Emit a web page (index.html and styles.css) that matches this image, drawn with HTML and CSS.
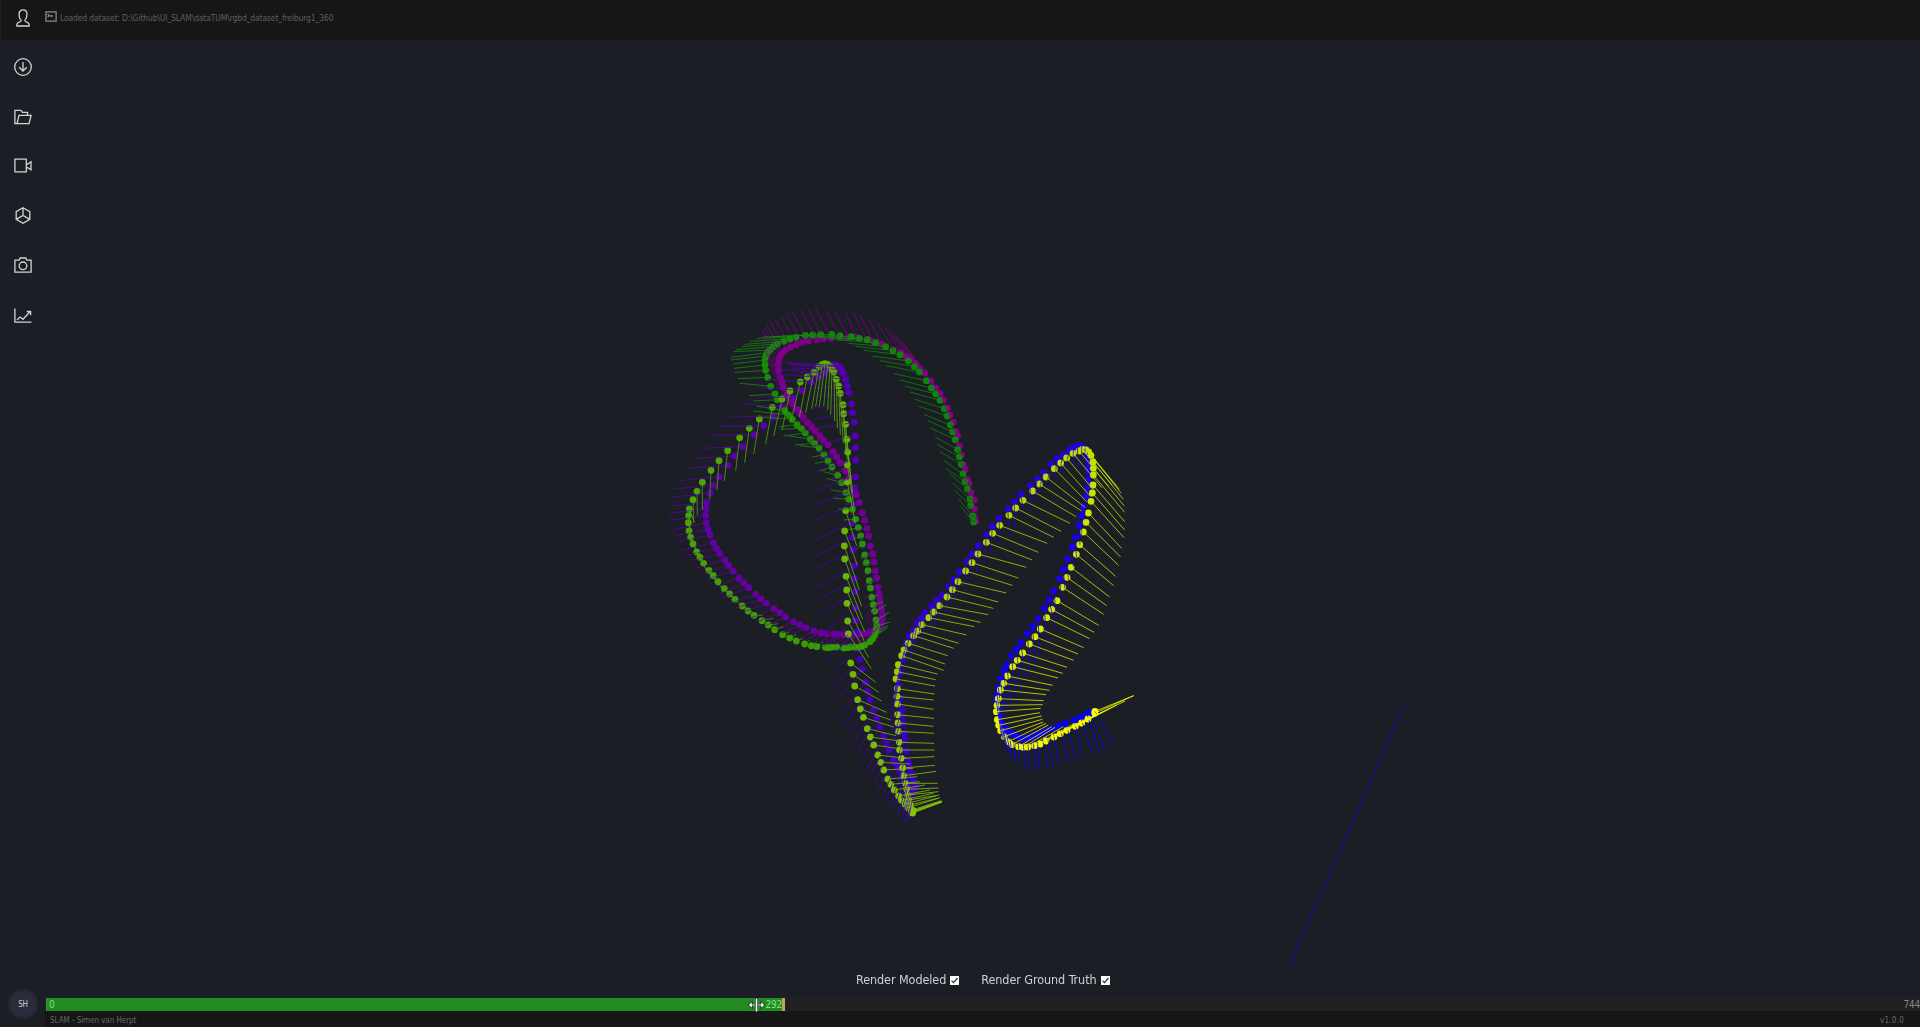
FILE: index.html
```html
<!DOCTYPE html>
<html lang="en">
<head>
<meta charset="utf-8">
<title>SLAM</title>
<link rel="stylesheet" href="styles.css">
</head>
<body>
<div class="app">
  <header class="topbar">
    <span class="user"><svg width="14" height="18" viewBox="0 0 14 18"><path d="M5.2 11.2C3.6 9.8 3 7.500 3 5.200 3 2.600 4.800 .9 7 .9s4 1.700 4 4.300c0 2.300-.6 4.600-2.200 6M5.200 11.200c0 1.300-.6 1.600-2 2C1.600 13.700.9 14.200.9 15.500V17h12.200v-1.500c0-1.300-.7-1.800-2.300-2.300-1.400-.4-2-.7-2-2"/></svg></span>
    <svg class="term" width="12" height="11" viewBox="0 0 12 11"><path d="M.9.9h10.200v9.200H.9zM2.700 3l1.500 1.500L2.700 6M5 5h3"/></svg>
    <span class="status">Loaded dataset: D:\Github\UI_SLAM\dataTUM\rgbd_dataset_freiburg1_360</span>
  </header>
  <div class="body">
    <nav class="side">
      <a><svg width="18" height="18" viewBox="0 0 18 18"><circle cx="9" cy="9" r="8.300"/><path d="M9 4v9M5.200 9.200 9 13l3.800-3.800"/></svg></a>
      <a><svg width="18" height="18" viewBox="0 0 18 18"><path d="M3 15.700H.9V2.400h6l1.600 2h5v3M3 15.700h12l2.100-8.300H5zM.9 15.700h2"/></svg></a>
      <a><svg width="18" height="18" viewBox="0 0 18 18"><path d="M.9 2.200h11.400v12.600H.9zM12.300 7h1.400L17 4.800v8l-3.300-2.200h-1.400"/></svg></a>
      <a><svg width="18" height="18" viewBox="0 0 18 18"><path d="M9 .8l6.800 3.800v7.800L9 16.200l-6.800-3.800V4.600zM9 .8v7.700M2.200 12.400 9 8.500l6.800 3.900"/></svg></a>
      <a><svg width="18" height="18" viewBox="0 0 18 18"><path d="M.9 15.200V3.200h4.300l1-2.200h5.600l1 2.200h4.300v12z"/><circle cx="9" cy="8.800" r="3.800"/></svg></a>
      <a><svg width="18" height="18" viewBox="0 0 18 18"><path d="M.9 2.400v13.700H17.500M3 14l3-3 3 2.300 7-7.500M12.700 5.500h3.900v3.700"/></svg></a>
      <span class="avatar">SH</span>
    </nav>
    <main class="main">
      <section class="view">
        <canvas id="scene" width="1874" height="956"></canvas>
        <div class="options">
          <label>Render Modeled <svg width="9" height="9" viewBox="0 0 9 9"><path d="M1.500 4.700l2 2 4-4.700"/></svg></label>
          <label>Render Ground Truth <svg width="9" height="9" viewBox="0 0 9 9"><path d="M1.500 4.700l2 2 4-4.700"/></svg></label>
        </div>
      </section>
      <div class="timeline">
        <div class="done"><span>0</span><span>292</span></div>
        <span class="total">744</span>
        <svg class="cursor" width="17" height="14" viewBox="0 0 17 14"><path d="M0 7l4.500-4v3H7V0h3v6h2.500V3L17 7l-4.500 4V8H10v6H7V8H4.500v3z" fill="#111"/><path d="M.8 7l3-2.700v2.100H7v1.200H3.800v2.100zM16.200 7l-3-2.700v2.100H10v1.200h3.200v2.100zM7.600.5h1.800v13H7.600z" fill="#fff"/></svg>
      </div>
      <footer class="foot"><span>SLAM - Simen van Herpt</span><span class="ver">v1.0.0</span></footer>
    </main>
  </div>
</div>
<script src="scene.js"></script>
</body>
</html>
```
FILE: styles.css
```css
* { box-sizing: border-box; }
body {
  margin: 0;
  overflow: hidden;
  background: #1b1e25;
  color: #d0d0d2;
  font-family: "DejaVu Sans Condensed", "DejaVu Sans", sans-serif;
  font-stretch: condensed;
}
svg { fill: none; stroke: #d4d4d4; stroke-width: 1.300; display: block; }
.app { display: flex; flex-direction: column; width: 1920px; height: 1027px; }
.topbar {
  display: flex;
  align-items: flex-start;
  height: 40px;
  margin-left: 1px;
  background: #161616;
}
.user { width: 44px; padding: 9px 0 0 15px; }
.term { margin-top: 11px; stroke: #8b8b8b; }
.status {
  margin: 12px 0 0 3px;
  color: #5c5e60;
  font-size: 8.500px;
  line-height: 13px;
  letter-spacing: -0.140px;
  white-space: pre;
}
.body { display: flex; flex: 1; min-height: 0; }
.side { display: flex; flex-direction: column; width: 45px; padding: 18px 0 8px 14px; }
.side a { height: 49.700px; }
.avatar {
  width: 30px;
  height: 30px;
  margin: auto 0 0 -6px;
  border: 3px solid #262934;
  border-radius: 50%;
  background: #2a2d39;
  font-size: 8px;
  line-height: 25px;
  letter-spacing: -0.300px;
  text-align: center;
}
.main { display: flex; flex: 1; flex-direction: column; }
.view { position: relative; height: 958px; padding-left: 1px; }
.view canvas { display: block; }
.options {
  position: absolute;
  top: 932px;
  left: 811px;
  display: flex;
  gap: 22px;
  font-size: 12.500px;
  line-height: 16px;
  letter-spacing: -0.080px;
}
.options label { display: flex; gap: 4px; align-items: center; white-space: nowrap; }
.options svg { background: #fff; stroke: #333; stroke-width: 1.200; }
.timeline {
  position: relative;
  display: flex;
  justify-content: space-between;
  height: 13px;
  margin-left: 1px;
  background: #212121;
  font-size: 10px;
  line-height: 13px;
  letter-spacing: -0.200px;
}
.done {
  display: flex;
  justify-content: space-between;
  width: 739px;
  padding-left: 2px;
  border-left: 1px solid #3d9340;
  border-right: 3px solid #c9a151;
  background: #228b22;
  color: #84e184;
}
.total { color: #8a8a8a; }
.cursor { position: absolute; left: 702px; top: 0; stroke: none; }
.foot {
  display: flex;
  justify-content: space-between;
  flex: 1;
  padding: 3px 16px 0 5px;
  background: #161616;
  color: #68686a;
  font-size: 8px;
  line-height: 13px;
}
.foot span { letter-spacing: -0.060px; }
.foot .ver { letter-spacing: 0.250px; }
```
FILE: scene.js
```js
// Camera trajectories. Each block: origin x, origin y, then poses as
// "x,y" or "x,y>ex,ey" (e = end of the view direction), in thirds of a pixel.
// Poses without a view direction take one interpolated from their neighbours.
const modeled = [
  [820, 300, "461,666>421,618 458,648>415,596 452,617>403,570 450,597>397,548 442,567>388,521 435,545>376,504 429,522>370,480 424,493>360,455 418,471>352,433 413,449>345,411 406,419>331,384 398,396>324,362 391,375>313,344 381,348>297,319 373,326>285,298 360,301>270,276 347,282>255,258 334,264>240,240 319,242>222,221 298,216>198,197 283,200>180,182 265,183>158,168 240,164>132,151 219,152>107,139 197,140>85,130 167,128>52,120 142,119>29,116 118,115 94,110 60,107 35,103"],
  [660, 300, "482,104>365,109 458,105 436,106>310,111 408,112>290,115 390,117>270,124 372,124>254,133 352,132>245,140 340,140>228,149 330,150>220,155 322,158>213,172 318,168>213,180 315,180>218,192 315,195>222,205 317,211>225,217 323,232>233,236 332,259>240,250 345,282>268,287 352,299>280,303 374,332>290,318 386,345>280,333 397,358>305,351 411,374>358,380 424,385>360,388 436,399>370,408 451,417>387,408 464,430>405,435 477,444>420,437 492,464>455,472 504,483>465,490 516,501>478,514 533,526>490,515 545,548>500,535 558,578 566,598>520,594"],
  [660, 460, "577,148 587,178>550,180 595,203 602,228 607,252>590,268 614,285 619,308 624,332 628,362 631,384>640,380 636,412 640,434>668,426 644,454>680,435 648,480>688,458 650,498>690,486 648,512>685,498 644,524>680,505 638,536>668,512 630,545>650,530 615,555>655,530 602,560>640,545 588,562>620,552 575,561>600,562 563,563 552,564>580,570 530,561 515,562>550,570 504,563 496,562 471,560>490,545 454,557 434,552>450,540 409,543>430,535 389,534>410,523 368,524>390,515 344,509>370,500 325,495>355,491 306,482>340,475 282,466>308,466 264,453>290,460 247,438 225,418>240,432 209,402 193,386>205,402 174,365 160,347>170,372 147,331 131,310>138,330 120,292 110,276>128,308 99,252>118,290 92,232>108,270 87,213>98,250 85,188>94,235 86,167>92,218 88,147>103,188 99,119>101,188 111,94>112,166 127,67>127,150 153,31>149,118"],
  [660, 300, "177,482>171,570 203,452>193,543 239,413>227,512 268,385>254,488 298,357>281,463 337,322>317,431 366,297>341,408 390,273>367,386 421,246>392,368 442,231>418,352 462,217>437,338 477,200>455,326 487,193>467,320 495,191>478,320 503,193>491,318 510,200>503,330 516,208>512,344 522,216>524,363 529,238>532,384 536,258>541,405 541,280>550,430 549,314>558,460 551,341>562,480 557,373>568,510 561,418>574,550 563,456>578,580 562,494>582,620 562,546>586,670"],
  [660, 460, "557,152>590,258 554,213>592,315 553,258>598,390 554,297>605,440 558,349>608,478 560,390>614,515 561,430>612,542 563,483>626,592 565,522>634,626"],
  [830, 630, "62,99>137,157 69,133>146,187 74,168>155,213 83,209>170,247 91,237>182,270 100,262>191,291 112,296>198,317 121,321>210,333 131,345>215,357 143,375>230,385 152,397>240,402 161,420>250,415 173,447>262,440 182,463>270,455 193,480>285,465 206,498>300,480 215,511>310,490 225,522>318,498 234,533>325,505 245,546>335,515 248,549>337,516 246,548>336,516 247,545>335,513 249,542>334,514 246,540>333,512 240,525>330,503 236,510>328,495 233,495>325,485 230,478>325,474 226,460>323,460 221,437>319,424 218,414>315,406 214,385>313,380 209,360>313,360 208,337>312,340 205,304>312,310 204,279>310,289 203,254>312,265 202,222>311,238 201,199>311,210 202,176>313,192 198,147>315,168 202,125>317,149 205,104>323,132 215,77>341,121 222,60>345,102 235,40>353,77 251,17>371,55 263,3>386,40"],
  [880, 430, "126,584>260,615 146,563>283,590 161,546>302,577 178,527>325,554 201,501>340,535 217,479>355,516 234,455>379,489 257,423>397,466 276,398>415,444 294,372>439,412 319,337>457,390 338,310>475,367 359,286>502,340 387,256>521,322 407,234>543,304 429,211>570,280 458,183>588,260 478,162>605,243 498,141>615,232 523,116>620,215 542,99>632,200 560,84>645,185 579,70 597,63 607,58 618,60>710,170 626,66>718,178 633,76>724,190 639,96>730,208 640,115>733,228 640,135>734,247 639,165>734,275 637,189>734,300 633,214>732,323 625,249>725,355 618,277>722,381 610,306>716,406 599,344>707,439 589,373>701,467 573,412>689,501 561,442>680,527 548,472>671,553"],
  [940, 600, "351,2>476,76 335,28>462,97 320,53>449,116 301,87>431,143 285,110>414,162 268,132>401,181 248,159>381,202 232,181>368,220 218,200>354,234 202,228>338,256 191,250>328,271 181,270>318,284 175,296>311,302 171,316>308,314 169,335>302,325 172,359>300,338 176,376>305,348 182,392>307,358 193,410>310,366 205,425>318,370 216,434>325,375 236,440>335,380 250,442>345,382 264,441>370,380 284,437>395,375 301,432>410,370 318,423>430,362 342,411>450,350 361,401>470,343 381,391>490,335 406,379>510,325 425,369>530,315 444,357>555,303 464,340>581,287 465,334>581,287"]
];
const truth = [
  [820, 300, "467,664>445,658 463,650 463,627 463,600 453,578 447,550 442,538 436,507 430,495 424,465>414,450 418,438 413,408 408,395 400,367 390,345 383,324 370,300 360,281>340,250 347,264 332,243 313,219>265,150 300,207>250,130 287,190>240,118 272,178>228,108 258,170>215,97 243,158>196,85 220,150>175,72 185,133>145,55 160,125>121,46 140,118>100,40 110,112>76,35 85,112>43,34 60,112>19,32"],
  [660, 300, "514,115>467,27 491,117>445,28 471,119>422,30 445,123>397,36 427,127>379,43 410,133>361,48 392,141>345,58 378,149>330,65 368,158>320,75 361,168>313,84 357,180>306,92 355,195>303,105 356,212>305,130 361,233>312,150 366,246>320,180 371,262 381,284 390,297 398,311>365,280 411,328 421,340 430,352 443,368>413,363 455,380 466,393 480,408 490,420 504,434>459,436 519,455 530,471 541,488>491,493"],
  [660, 460, "556,33>505,36 567,54>515,56 581,84>535,88 589,104 598,127 607,158 615,181 621,205 626,228 632,258>602,268 638,282 642,305 646,333>610,350 650,354 654,382 657,402 660,420>615,470 662,433 664,448 667,462 667,478>620,520 664,492 655,505 640,512 625,518 610,521>570,560 595,523 580,524 565,524 550,524 536,523 521,522 499,521>459,541 482,518 462,513 438,503 420,495 401,485 378,471 360,458>295,485 342,446 319,430 303,417 287,403>210,430 266,383 252,369>178,402 237,354>160,384 219,333>142,357 206,317>125,341 195,300>108,325 180,281>93,302 169,265>75,287 160,248>65,271 150,225>52,245 144,208>45,227 139,189>37,209 137,166>30,181 138,146>27,160 141,127>28,139 151,99>36,112 162,76>42,87 178,50>57,62 204,16>79,25"],
  [660, 300, "224,468>100,475 249,440>122,445 283,404>152,406 311,378>180,378 340,351>207,348 367,320>243,311 400,294>268,286 426,272>292,262 454,246>325,238 475,232>345,222 495,218>362,208 508,205>375,187 520,196>380,188 530,196>390,193 538,200>395,198 544,208>400,205 550,220>420,218 557,239>440,225 562,258>440,265 567,279>460,290 575,312>460,325 578,338>462,358 583,367>475,385 586,408>485,430 587,443>480,475 587,480>462,515"],
  [660, 460, "586,50>462,92 585,88>462,135 582,135>462,180 577,188>462,243 577,232>464,290 580,269>464,329 583,317>471,382 584,356>475,422 586,394>478,464 586,444>485,520 587,482>490,560 592,516>497,602 596,565>528,628"],
  [830, 630, "90,88>5,180 97,118>18,213 107,157>30,256 113,184>45,285 120,210>57,312 131,241>69,345 140,265>82,368 149,289>93,394 161,318>110,420 169,340>120,443 178,361>133,462 190,388>143,487 198,403>157,502 205,415>167,514 214,432>178,528 222,450>190,540 232,463>203,555 240,475>215,565 246,485>225,574 252,482>233,578 258,468>232,568 250,450>225,550 243,430 238,410>215,505 235,392 230,363>205,460 225,330>200,430 224,310 219,280>190,380 217,258 217,238>185,335 212,205 205,165>182,270 210,130 218,85 222,65>195,180 230,38 238,18>218,130 250,2>240,90"],
  [880, 430, "111,580>100,650 123,564 136,548 155,527>150,600 170,511 186,494 206,469>200,545 222,448 238,425>225,500 261,394 277,371 295,347>290,430 319,313 337,288>332,375 357,265>360,345 384,236>385,320 403,215>403,295 423,193>430,250 451,167>450,235 471,147>465,210 490,127>475,195 513,103>500,165 531,86>525,145 548,73>540,130 568,60>555,120 580,53>580,110 592,47>595,110 605,48>605,120 615,55 622,68>618,130 626,85 628,105>625,170 627,125 625,150 622,175>615,235 619,200 610,231>605,300 604,257 597,286>600,345 586,322 576,350>580,410 562,387>565,450 550,417>555,480 539,446>545,520 521,483>530,560 507,509>525,590"],
  [940, 600, "313,24>320,130 294,56>300,175 278,79>285,200 262,100>270,220 243,127>255,240 229,147>243,270 214,167>228,300 200,194>215,320 191,215>205,335 181,237>195,350 175,263>190,380 171,283 169,303>185,410 172,325 178,350>200,445 185,370>205,455 195,387>215,470 207,395>218,480 220,403>225,485 233,410>240,495 248,415>257,508 262,414>272,512 277,410>290,510 290,405>300,510 305,398>322,508 318,392>340,500 338,385>357,494 358,378>387,487 377,370>410,480 403,360>427,470 422,352>458,462 441,342>478,458 451,338>494,450 465,334>522,440"]
];

function expand(blocks, from, to) {
  const poses = [];
  for (const [ox, oy, list] of blocks) {
    for (const item of list.split(" ")) {
      const [p, e] = item.split(">").map(s => s.split(",").map(Number));
      poses.push({
        x: ox + p[0] / 3, y: oy + p[1] / 3,
        d: e ? [(e[0] - p[0]) / 3, (e[1] - p[1]) / 3] : null
      });
    }
  }
  let last = 0;
  poses.forEach((pose, i) => {
    if (!pose.d) return;
    for (let k = last + 1; k < i; k++) {
      const t = (k - last) / (i - last);
      poses[k].d = [0, 1].map(a => poses[last].d[a] * (1 - t) + pose.d[a] * t);
    }
    last = i;
  });
  poses.forEach((pose, i) => {
    const t = Math.pow(i / (poses.length - 1), 1.5);
    pose.color = "rgb(" + from.map((c, a) => Math.round(c + (to[a] - c) * t)) + ")";
  });
  return poses;
}

const ctx = document.getElementById("scene").getContext("2d");
ctx.translate(-46, -40);
const tracks = [
  expand(truth, [132, 0, 132], [0, 0, 255]),
  expand(modeled, [8, 132, 8], [255, 255, 0])
];
for (const track of tracks) {
  for (const p of track) {
    ctx.fillStyle = p.color;
    ctx.beginPath();
    ctx.arc(p.x, p.y, 3.4, 0, Math.PI * 2);
    ctx.fill();
  }
}
function line(x, y, ex, ey, color) {
  ctx.strokeStyle = color;
  ctx.beginPath();
  ctx.moveTo(x, y);
  ctx.lineTo(ex, ey);
  ctx.stroke();
}
ctx.globalAlpha = 0.78;
ctx.lineWidth = 1;
for (const track of tracks) {
  for (const p of track) line(p.x, p.y, p.x + p.d[0], p.y + p.d[1], p.color);
}
line(1403.500, 706.500, 1289.500, 965.500, "#0000d8");
```
